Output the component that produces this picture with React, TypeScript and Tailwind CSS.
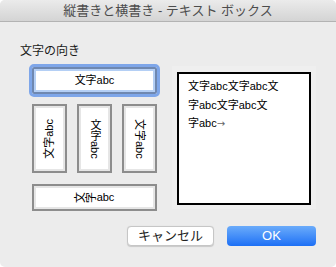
import React from "react";

const font = "font-['Liberation_Sans','Noto_Sans_CJK_JP',sans-serif]";

function OptionBox({ selected, children }: { selected?: boolean; children: React.ReactNode }) {
  return (
    <div
      className={
        selected
          ? "h-[27px] border-2 border-[#6f88b0] bg-[#b4cff5] p-[2px] outline-[3px] outline-[#7ea6e9] outline-offset-0 rounded-[2px]"
          : "h-[27px] border-2 border-[#8d8d8d] bg-[#e6e6e6] p-[2px]"
      }
    >
      <div className="h-full bg-white flex items-center justify-center text-[11px] text-black leading-none">
        {children}
      </div>
    </div>
  );
}

function VerticalBox({ children }: { children: React.ReactNode }) {
  return (
    <div className="w-[35px] h-[69px] border-2 border-[#8d8d8d] bg-[#e6e6e6] p-[2px]">
      <div className="h-full bg-white flex items-center justify-center text-[11px] text-black leading-none">
        {children}
      </div>
    </div>
  );
}

export default function App() {
  return (
    <div className={`w-[336px] h-[267px] bg-white ${font}`}>
      <div className="w-full h-full rounded-[5px] bg-[#ececec] overflow-hidden flex flex-col">
        <div className="h-[22px] shrink-0 border-b border-[#b3b3b3] bg-gradient-to-b from-[#ebebeb] to-[#d4d4d4] flex items-center justify-center text-[13px] text-[#4c4c4c]">
          縦書きと横書き - テキスト ボックス
        </div>

        <div className="pt-[22px]">
          <div className="ml-[20px] h-[15px] text-[12px] leading-[15px] text-[#1a1a1a]">文字の向き</div>

          <div className="flex items-start mt-[7px]">
            <div className="ml-[32px] mt-[1px] w-[125px] flex flex-col">
              <OptionBox selected>文字abc</OptionBox>

              <div className="flex gap-[10px] mt-[10px]">
                <VerticalBox>
                  <span className="[writing-mode:vertical-rl] [text-orientation:sideways] rotate-180">文字abc</span>
                </VerticalBox>
                <VerticalBox>
                  <span className="[writing-mode:vertical-rl]">文字abc</span>
                </VerticalBox>
                <VerticalBox>
                  <span className="[writing-mode:vertical-rl] [text-orientation:sideways]">文字abc</span>
                </VerticalBox>
              </div>

              <div className="mt-[11px]">
                <OptionBox>
                  <span className="inline-block -rotate-90">文</span>
                  <span className="inline-block -rotate-90">字</span>
                  <span>abc</span>
                </OptionBox>
              </div>
            </div>

            <div className="ml-[15px] w-[144px] h-[143px] bg-[#efefef] pl-[5px] pt-[6px]">
              <div className="w-[134px] h-[133px] border-2 border-black bg-white pl-[9px] pt-[3px] text-[11px] leading-[18.5px] text-black">
                <div>文字abc文字abc文</div>
                <div>字abc文字abc文</div>
                <div>
                  字abc<span className="text-[10px] text-[#666] font-['DejaVu_Sans',sans-serif]">→</span>
                </div>
              </div>
            </div>
          </div>

          <div className="flex justify-end gap-[13px] pr-[20px] mt-[15px]">
            <button className="w-[87px] h-[20px] rounded-[4px] border border-[#c6c6c6] bg-white shadow-[0_0.5px_1px_rgba(0,0,0,0.15)] text-[13px] text-[#222] flex items-center justify-center">
              キャンセル
            </button>
            <button className="w-[89px] h-[20px] rounded-[4px] bg-gradient-to-b from-[#6aabfa] to-[#1b6ff5] text-[13px] text-white flex items-center justify-center">
              OK
            </button>
          </div>
        </div>
      </div>
    </div>
  );
}
